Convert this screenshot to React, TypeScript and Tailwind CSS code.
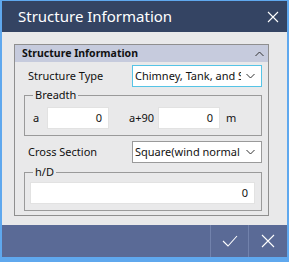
const font = { fontFamily: '"Noto Sans", "Open Sans", sans-serif' }

function Chevron({ up = false }: { up?: boolean }) {
  return (
    <svg width="9" height="6" viewBox="0 0 9 6" className="shrink-0">
      <path
        d={up ? 'M0.5 5 L4.5 1 L8.5 5' : 'M0.5 1 L4.5 5 L8.5 1'}
        fill="none"
        stroke="#333"
        strokeWidth="1"
      />
    </svg>
  )
}

function Select({ value, focused }: { value: string; focused?: boolean }) {
  return (
    <div
      className={`w-[130px] h-[22px] bg-white border flex items-center pl-[2px] pr-[6px] gap-[5px] ${
        focused ? 'border-[#56c4e6]' : 'border-[#9a9a9a]'
      }`}
    >
      <span className="flex-1 overflow-hidden whitespace-nowrap text-[11px] text-[#111]">{value}</span>
      <Chevron />
    </div>
  )
}

function NumInput({ className }: { className: string }) {
  return (
    <div className={`h-[22px] bg-white border border-[#e2e2e2] flex items-center justify-end pr-[6px] text-[11px] text-[#111] ${className}`}>
      0
    </div>
  )
}

export default function App() {
  return (
    <div className="w-[289px] h-[262px] flex flex-col bg-[#5fa8ee] px-[2px] pt-[1px] pb-[5px]" style={font}>
      <div className="h-[31px] bg-[#344463] flex items-center justify-between pl-[16px] pr-[8px]">
        <span className="text-white text-[15px]">Structure Information</span>
        <svg width="12" height="12" viewBox="0 0 12 12">
          <path d="M1 1 L11 11 M11 1 L1 11" stroke="#fff" strokeWidth="1.1" />
        </svg>
      </div>

      <div className="flex-1 bg-[#e9e9ea] pt-[12px] pl-[12px] pr-[18px]">
        <div className="border border-[#8f8f8f] pb-[4px]">
          <div className="h-[17px] bg-[#c6cbdd] flex items-center justify-between pl-[7px] pr-[4px]">
            <span className="text-[10.5px] font-bold text-[#111]">Structure Information</span>
            <Chevron up />
          </div>

          <div className="pl-[9px] pr-[6px] pt-[3px]">
            <div className="flex items-center justify-between">
              <span className="ml-[4px] text-[11px] text-[#111]">Structure Type</span>
              <Select value="Chimney, Tank, and Silo" focused />
            </div>

            <fieldset className="mt-[1px] border border-[#9a9a9a] pl-[8px] pr-[6px] pt-[5px] pb-[6px]">
              <legend className="px-[2px] text-[11px] leading-[14px] text-[#111]">Breadth</legend>
              <div className="flex items-center text-[11px] text-[#111]">
                <span className="w-[14px]">a</span>
                <NumInput className="w-[62px]" />
                <span className="ml-[20px] w-[29px]">a+90</span>
                <NumInput className="w-[62px]" />
                <span className="ml-[6px]">m</span>
              </div>
            </fieldset>

            <div className="mt-[5px] flex items-center justify-between">
              <span className="ml-[4px] text-[11px] text-[#111]">Cross Section</span>
              <Select value="Square(wind normal to face)" />
            </div>

            <fieldset className="mt-[2px] border border-[#9a9a9a] pl-[5px] pr-[6px] pt-[3px] pb-[6px]">
              <legend className="ml-[3px] px-[2px] text-[11px] leading-[14px] text-[#111]">h/D</legend>
              <NumInput className="w-full" />
            </fieldset>
          </div>
        </div>
      </div>

      <div className="h-[32px] bg-[#5a6a96] flex justify-end">
        <button type="button" className="w-[38px] h-full border-l border-[#7282ac] flex items-center justify-center">
          <svg width="16" height="12" viewBox="0 0 16 12">
            <path d="M1 6 L6 11 L15 1" fill="none" stroke="#fff" strokeWidth="1.1" />
          </svg>
        </button>
        <button type="button" className="w-[39px] h-full border-l border-[#7282ac] flex items-center justify-center">
          <svg width="14" height="14" viewBox="0 0 14 14">
            <path d="M1 1 L13 13 M13 1 L1 13" stroke="#fff" strokeWidth="1.1" />
          </svg>
        </button>
      </div>
    </div>
  )
}
